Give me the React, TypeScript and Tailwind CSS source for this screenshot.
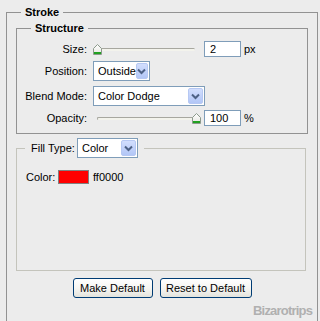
import React from "react";

const font = { fontFamily: '"Liberation Sans", Arial, sans-serif' };

function Thumb() {
  return (
    <svg width="9" height="11" viewBox="0 0 9 11" className="block">
      <defs>
        <linearGradient id="tg" x1="0" y1="0" x2="0" y2="1">
          <stop offset="0" stopColor="#ffffff" />
          <stop offset="1" stopColor="#e6e6e0" />
        </linearGradient>
      </defs>
      <path d="M0.5 4.5 L4.5 0.5 L8.5 4.5 L8.5 10.5 L0.5 10.5 Z" fill="url(#tg)" stroke="#8c9a8c" />
      <rect x="1" y="8" width="7" height="2" fill="#21a121" />
    </svg>
  );
}

function Slider({ pos }: { pos: number }) {
  return (
    <div className="relative w-[108px] h-[16px]">
      <div className="absolute left-[4px] right-[6px] top-[7px] h-[3px] rounded-full border-t border-l border-[#a7a79f] bg-[#f3f3ec]" />
      <div className="absolute top-[3px]" style={{ left: pos }}>
        <Thumb />
      </div>
    </div>
  );
}

function Chevron() {
  return (
    <svg width="9" height="7" viewBox="0 0 9 7">
      <path d="M1 1.5 L4.5 5 L8 1.5" fill="none" stroke="#4d6185" strokeWidth="2" />
    </svg>
  );
}

function Select({ value, width }: { value: string; width: string }) {
  return (
    <div className={`flex h-[20px] border border-[#7f9db9] bg-white ${width}`}>
      <div className="flex-1 pl-[4px] leading-[18px] text-[11px]">{value}</div>
      <div className="my-[1px] mr-[1px] w-[15px] rounded-[2px] border border-[#b6c8f3] bg-gradient-to-b from-[#d2defd] to-[#b2c6f6] flex items-center justify-center">
        <Chevron />
      </div>
    </div>
  );
}

function NumInput({ value }: { value: string }) {
  return (
    <div className="w-[37px] h-[16px] border border-[#7f9db9] bg-white pl-[5px] leading-[14px] text-[11px]">
      {value}
    </div>
  );
}

function XpButton({ children, width }: { children: React.ReactNode; width: string }) {
  return (
    <button
      className={`h-[20px] ${width} rounded-[3px] border border-[#003c74] bg-gradient-to-b from-white via-[#f6f6f3] to-[#e3e3dc] text-[11px] text-black leading-[18px]`}
      style={font}
    >
      {children}
    </button>
  );
}

export default function App() {
  return (
    <div
      className="relative w-[320px] h-[321px] overflow-hidden bg-[#ececec] pt-[6px] text-[11px] text-black"
      style={font}
    >
      <fieldset className="ml-[6px] w-[312px] h-[340px] border border-[#929292] px-[9px]">
        <legend className="ml-[5px] px-[4px] font-bold leading-[13px] text-[11px]">Stroke</legend>

        <fieldset className="mt-[3px] border border-[#929292] pb-[7px]">
          <legend className="ml-[14px] px-[4px] font-bold leading-[13px] text-[11px]">Structure</legend>

          <div className="mt-[6px] flex items-center h-[16px]">
            <div className="w-[70px] text-right">Size:</div>
            <div className="ml-[6px]">
              <Slider pos={0} />
            </div>
            <div className="ml-[3px]">
              <NumInput value="2" />
            </div>
            <div className="ml-[3px]">px</div>
          </div>

          <div className="mt-[4px] flex items-center h-[20px]">
            <div className="w-[70px] text-right">Position:</div>
            <div className="ml-[6px]">
              <Select value="Outside" width="w-[57px]" />
            </div>
          </div>

          <div className="mt-[5px] flex items-center h-[20px]">
            <div className="w-[70px] text-right">Blend Mode:</div>
            <div className="ml-[6px]">
              <Select value="Color Dodge" width="w-[112px]" />
            </div>
          </div>

          <div className="mt-[4px] flex items-center h-[16px]">
            <div className="w-[70px] text-right">Opacity:</div>
            <div className="ml-[6px]">
              <Slider pos={99} />
            </div>
            <div className="ml-[3px]">
              <NumInput value="100" />
            </div>
            <div className="ml-[3px]">%</div>
          </div>
        </fieldset>

        <fieldset className="mt-[4px] mr-[2px] border border-[#c4c4bc]">
          <legend className="ml-[8px] px-[6px]">
            <div className="flex items-center h-[20px]">
              <div className="w-[46px]">Fill Type:</div>
              <Select value="Color" width="w-[61px]" />
            </div>
          </legend>
          <div className="h-[112px] pt-[12px] pl-[9px]">
            <div className="flex items-center h-[14px]">
              <div className="w-[32px]">Color:</div>
              <div className="w-[31px] h-[14px] border border-[#808080] bg-[#ff0000]" />
              <div className="ml-[4px]">ff0000</div>
            </div>
          </div>
        </fieldset>

        <div className="mt-[7px] flex justify-center gap-[7px]">
          <XpButton width="w-[80px]">Make Default</XpButton>
          <XpButton width="w-[92px]">Reset to Default</XpButton>
        </div>
      </fieldset>

      <div className="absolute left-[253px] top-[301px] text-[13px] font-bold tracking-[-0.8px] text-[#b0b0b0]">
        Bizarotrips
      </div>
    </div>
  );
}
